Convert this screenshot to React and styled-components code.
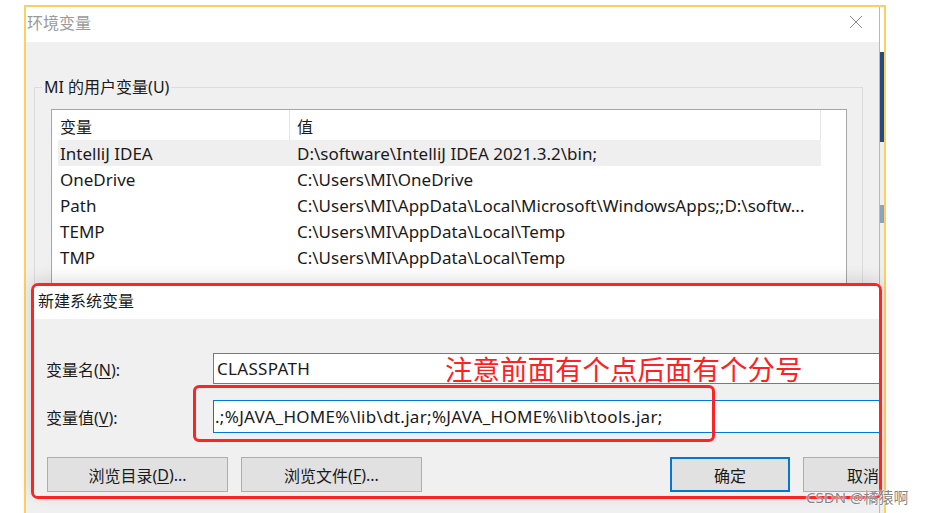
import React from "react";
import styled, { createGlobalStyle } from "styled-components";

const Global = createGlobalStyle`
  html, body { margin: 0; padding: 0; background: #ffffff; }
  body { font-family: "Noto Sans", "Noto Sans CJK SC", sans-serif; color: #1a1a1a; }
  * { box-sizing: border-box; }
`;

const Stage = styled.div`
  position: relative;
  width: 926px;
  height: 513px;
  overflow: hidden;
  padding: 5px 0 0 24px;
`;

const Frame = styled.div`
  position: relative;
  width: 862px;
  height: 520px;
  border: 2px solid #fdd05e;
  border-bottom: none;
  display: flex;
`;

const MainWin = styled.div`
  flex: 1;
  display: flex;
  flex-direction: column;
  min-width: 0;
`;

const TitleBar = styled.div`
  height: 35px;
  background: #ffffff;
  display: flex;
  align-items: center;
  justify-content: space-between;
  padding: 0 16px 5px 1px;
  font-size: 16px;
  color: #9a9a9a;
  flex-shrink: 0;
`;

const Body = styled.div`
  flex: 1;
  background: #f0f0f0;
  padding: 34px 16px 0 8px;
`;

const Group = styled.fieldset`
  margin: 0;
  border: 1px solid #dcdcdc;
  padding: 11px 15px 0 16px;
  height: 300px;
`;

const Legend = styled.legend`
  margin-left: -9px;
  padding: 0 2px;
  font-size: 16px;
  line-height: 22px;
  color: #1a1a1a;
`;

const List = styled.div`
  background: #ffffff;
  border: 1px solid #a6a6a6;
  height: 260px;
`;

const Row = styled.div`
  display: grid;
  grid-template-columns: 238px 531px 1fr;
  height: ${(p) => (p.$header ? 30 : 26)}px;
  align-items: center;
  font-size: ${(p) => (p.$header ? 16 : 17)}px;
  white-space: nowrap;
`;

const Cell = styled.div`
  height: 100%;
  display: flex;
  align-items: center;
  border-right: ${(p) => (p.$header ? "1px solid #e5e5e5" : "none")};
  background: ${(p) => (p.$sel ? "#efefef" : "transparent")};
  margin-left: ${(p) => (p.$first && p.$sel ? 6 : 0)}px;
  padding-left: ${(p) => (p.$first ? (p.$sel ? 2 : 8) : 7)}px;
  padding-top: ${(p) => (p.$header ? 2 : 0)}px;
  overflow: hidden;
`;

const EdgeStrip = styled.div`
  width: 5px;
  display: flex;
  flex-direction: column;
  border-left: 1px solid #b9b9b9;
`;

const EdgeSeg = styled.div`
  height: ${(p) => p.$h}px;
  background: ${(p) => p.$c};
`;

const Dialog = styled.div`
  position: absolute;
  left: 5px;
  top: 276px;
  width: 851px;
  height: 216px;
  border: 3px solid #ff2424;
  border-radius: 7px;
  overflow: hidden;
  display: flex;
  flex-direction: column;
  box-shadow: 0 -4px 16px rgba(0, 0, 0, 0.12);
`;

const DialogTitle = styled.div`
  height: 33px;
  background: #ffffff;
  display: flex;
  align-items: center;
  padding: 0 0 5px 4px;
  font-size: 16px;
  color: #1a1a1a;
`;

const DialogBody = styled.div`
  position: relative;
  flex: 1;
  background: #f0f0f0;
  padding: 34px 0 0 12px;
`;

const FieldRow = styled.div`
  display: grid;
  grid-template-columns: 167px 1fr;
  align-items: center;
  margin-bottom: ${(p) => p.$mb || 0}px;
  margin-right: -12px;
`;

const Label = styled.div`
  font-size: 16px;
  color: #1a1a1a;
  u { text-decoration-thickness: 1px; text-underline-offset: 2px; }
`;

const Input = styled.div`
  height: ${(p) => p.$h}px;
  background: #ffffff;
  border: 1px solid ${(p) => (p.$focus ? "#0078d7" : "#7a7a7a")};
  display: flex;
  align-items: center;
  padding-left: ${(p) => (p.$focus ? 1 : 3)}px;
  font-size: 17px;
  letter-spacing: 0.3px;
  white-space: nowrap;
  color: #1a1a1a;
`;

const ButtonRow = styled.div`
  display: flex;
  gap: 13px;
  padding-left: 1px;
`;

const Button = styled.div`
  flex-shrink: 0;
  width: ${(p) => p.$w}px;
  height: 35px;
  margin-left: ${(p) => p.$push || 0}px;
  background: #e1e1e1;
  border: ${(p) => (p.$default ? "2px solid #0078d7" : "1px solid #adadad")};
  display: flex;
  align-items: center;
  justify-content: center;
  font-size: 16px;
  color: #1a1a1a;
  u { text-decoration-thickness: 1px; text-underline-offset: 2px; }
`;

const Note = styled.div`
  position: absolute;
  left: 411px;
  top: 32px;
  font-size: 27.5px;
  line-height: 34px;
  color: #ff2121;
  white-space: nowrap;
  font-family: "Noto Sans CJK SC", sans-serif;
`;

const NoteBox = styled.div`
  position: absolute;
  left: 159px;
  top: 66px;
  width: 522px;
  height: 57px;
  border: 3px solid #ff2424;
  border-radius: 6px;
`;

const Watermark = styled.div`
  position: absolute;
  left: 806px;
  top: 486px;
  font-size: 15px;
  color: rgba(110, 110, 110, 0.85);
  text-shadow: 0 0 2px #fff, 0 0 1px #fff;
  white-space: nowrap;
  font-family: "Noto Sans", "Noto Sans CJK SC", sans-serif;
`;

const CloseIcon = () => (
  <svg width="14" height="14" viewBox="0 0 14 14">
    <path d="M1 1 L13 13 M13 1 L1 13" stroke="#8a8a8a" strokeWidth="1" fill="none" />
  </svg>
);

const rows = [
  ["IntelliJ IDEA", "D:\\software\\IntelliJ IDEA 2021.3.2\\bin;", true],
  ["OneDrive", "C:\\Users\\MI\\OneDrive"],
  ["Path", "C:\\Users\\MI\\AppData\\Local\\Microsoft\\WindowsApps;;D:\\softw..."],
  ["TEMP", "C:\\Users\\MI\\AppData\\Local\\Temp"],
  ["TMP", "C:\\Users\\MI\\AppData\\Local\\Temp"],
];

export default function App() {
  return (
    <>
      <Global />
      <Stage>
        <Frame>
          <MainWin>
            <TitleBar>
              <span>环境变量</span>
              <CloseIcon />
            </TitleBar>
            <Body>
              <Group>
                <Legend>MI 的用户变量(U)</Legend>
                <List>
                  <Row $header>
                    <Cell $first $header>变量</Cell>
                    <Cell $header>值</Cell>
                    <Cell />
                  </Row>
                  {rows.map(([n, v, sel]) => (
                    <Row key={n}>
                      <Cell $first $sel={sel}>{n}</Cell>
                      <Cell $sel={sel}>{v}</Cell>
                      <Cell />
                    </Row>
                  ))}
                </List>
              </Group>
            </Body>
          </MainWin>
          <EdgeStrip>
            <EdgeSeg $h={45} $c="#ffffff" />
            <EdgeSeg $h={90} $c="#2b4a7c" />
            <EdgeSeg $h={63} $c="#efefef" />
            <EdgeSeg $h={18} $c="#8da2c0" />
            <EdgeSeg $h={300} $c="#efefef" />
          </EdgeStrip>
          <Dialog>
            <DialogTitle>新建系统变量</DialogTitle>
            <DialogBody>
              <FieldRow $mb={16}>
                <Label>变量名(<u>N</u>):</Label>
                <Input $h={31}>CLASSPATH</Input>
              </FieldRow>
              <FieldRow $mb={24}>
                <Label>变量值(<u>V</u>):</Label>
                <Input $h={33} $focus>.;%JAVA_HOME%\lib\dt.jar;%JAVA_HOME%\lib\tools.jar;</Input>
              </FieldRow>
              <ButtonRow>
                <Button $w={181}>浏览目录(<u>D</u>)...</Button>
                <Button $w={181}>浏览文件(<u>F</u>)...</Button>
                <Button $w={120} $push={235} $default>确定</Button>
                <Button $w={120}>取消</Button>
              </ButtonRow>
              <Note>注意前面有个点后面有个分号</Note>
              <NoteBox />
            </DialogBody>
          </Dialog>
        </Frame>
        <Watermark>CSDN @橘猿啊</Watermark>
      </Stage>
    </>
  );
}
